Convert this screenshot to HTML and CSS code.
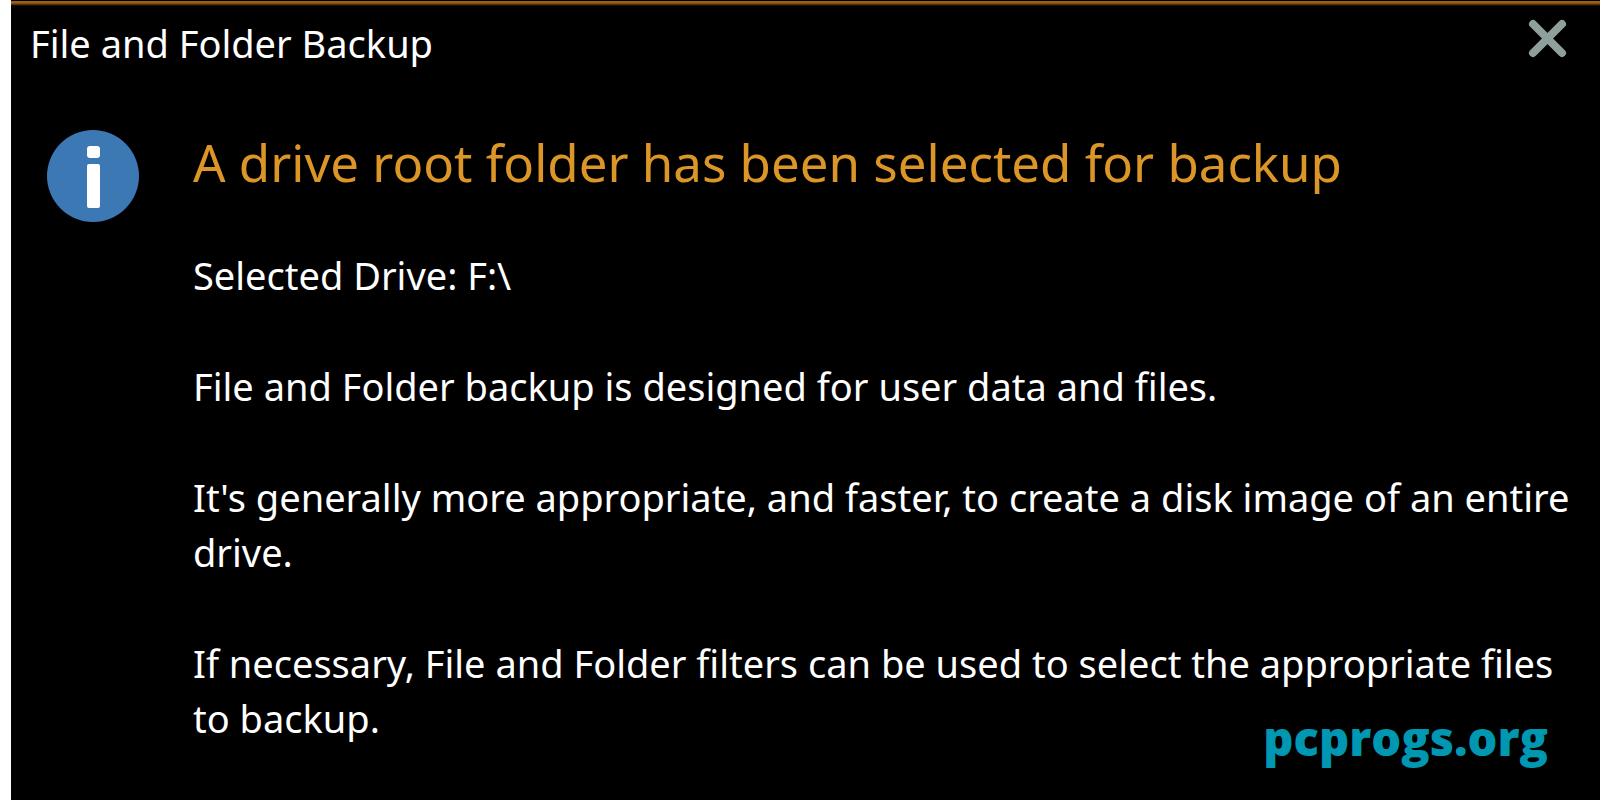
FILE: index.html
```
<!DOCTYPE html>
<html lang="en">
<head>
    <meta charset="UTF-8">
    <meta name="viewport" content="width=device-width,initial-scale=1.0">
    <title>File and Folder Backup</title>
    <link rel="stylesheet" href="styles.css">
</head>
<body>
    <div class="dialog" role="dialog" aria-labelledby="dialog-title">
        <header class="title-bar">
            <h1 id="dialog-title">File and Folder Backup</h1>
            <button class="close" type="button" aria-label="Close">
                <svg viewBox="0 0 40 40">
                    <path d="M5 5L34 34M34 5L5 34"/>
                </svg>
            </button>
        </header>
        <main class="content">
            <svg class="info-icon" viewBox="0 0 92 92">
                <circle cx="46" cy="46" r="46" fill="#3c78b4"/>
                <rect x="40" y="16" width="13" height="12" rx="3" fill="#fff"/>
                <rect x="40" y="34" width="13" height="44" rx="2" fill="#fff"/>
            </svg>
            <div class="message">
                <h2>A drive root folder has been selected for backup</h2>
                <p>Selected Drive: F:\</p>
                <p>File and Folder backup is designed for user data and files.</p>
                <p>It's generally more appropriate, and faster, to create a disk image of an entire drive.</p>
                <p>If necessary, File and Folder filters can be used to select the appropriate files to backup.</p>
            </div>
        </main>
        <a class="site" href="#">pcprogs.org</a>
    </div>
</body>
</html>
```
FILE: styles.css
```
*{
    margin: 0;
    padding: 0;
    box-sizing: border-box;
}
body{
    background-color: white;
    font-family: "Noto Sans", sans-serif;
}
.dialog{
    position: relative;
    min-height: 100vh;
    margin-left: 11px;
    padding-top: 5px;
    background: linear-gradient(#000 1px, #9a5f14 1px, #9a5f14 3px, #000 6px);
    color: white;
}
.title-bar{
    display: flex;
    justify-content: space-between;
    align-items: flex-start;
    height: 75px;
    padding: 14px 32px 0 19px;
}
.title-bar h1{
    font-size: 38px;
    font-weight: 400;
    line-height: 48px;
}
.close{
    width: 40px;
    height: 40px;
    background: none;
    border: none;
    cursor: pointer;
}
.close svg{
    display: block;
    stroke: #8fa09c;
    stroke-width: 8;
    stroke-linecap: round;
}
.content{
    display: flex;
    gap: 54px;
    padding: 50px 24px 0 36px;
}
.info-icon{
    flex: none;
    width: 92px;
    height: 92px;
}
.message{
    padding-top: 4px;
}
.message h2{
    color: #dc9628;
    font-size: 51px;
    font-weight: 400;
    line-height: 56px;
}
.message p{
    margin-top: 56px;
    font-size: 38px;
    line-height: 55px;
}
.message h2 + p{
    margin-top: 58px;
}
.site{
    position: absolute;
    right: 52px;
    bottom: 38px;
    color: #0097b2;
    font-family: "Open Sans", sans-serif;
    font-size: 47px;
    font-weight: 800;
    line-height: 48px;
    text-decoration: none;
}
```
